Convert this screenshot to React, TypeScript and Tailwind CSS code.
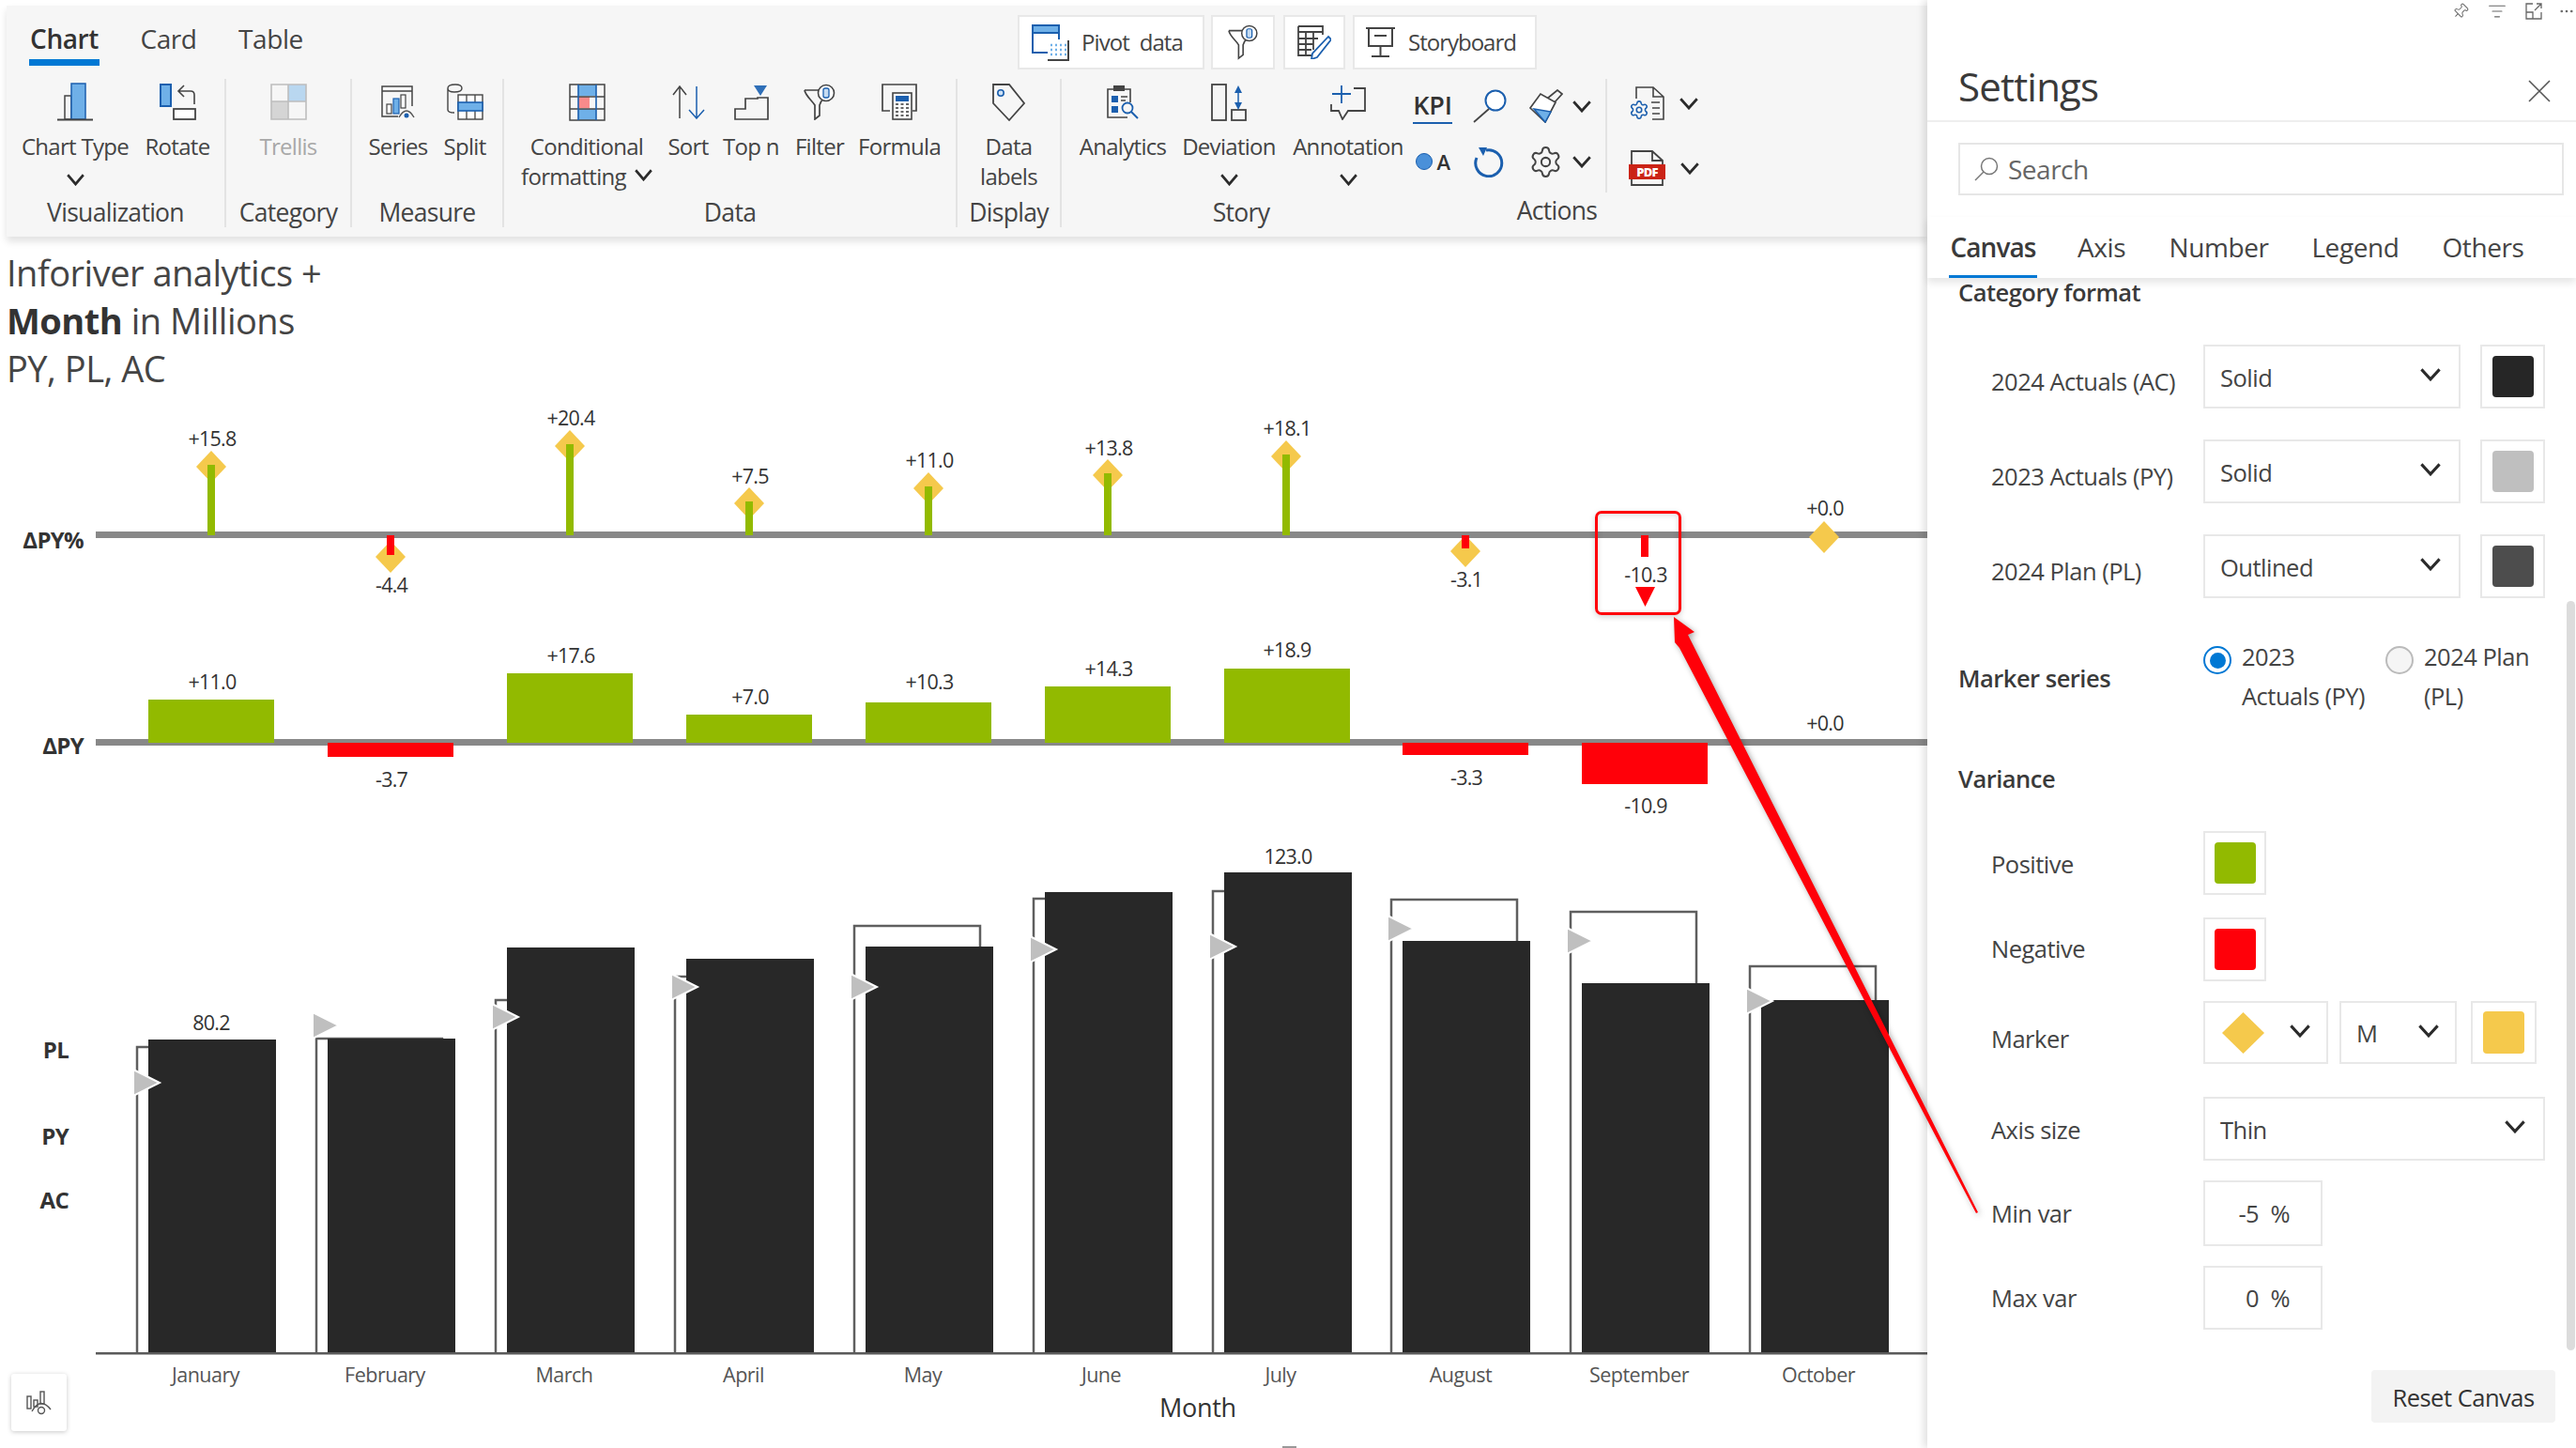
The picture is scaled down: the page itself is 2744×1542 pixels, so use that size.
import React from "react";
import { Settings as Gear, Pin, ListFilter, Ellipsis } from "lucide-react";

const G = "#444";
const B = "#1b5fae";
const L = "#6fb0e8";

function Chevron({ w = 20, h = 13 }: { w?: number; h?: number }) {
  return (
    <svg width={w} height={h} viewBox="0 0 16 10" fill="none" stroke="#2b2b2b" strokeWidth="2.2" preserveAspectRatio="none">
      <path d="M1 1 L8 8.5 L15 1" />
    </svg>
  );
}

const ChartTypeI = () => (
  <svg width="38" height="41" viewBox="0 0 38 41" fill="none">
    <rect x="8" y="14" width="7" height="25" stroke={G} strokeWidth="1.5" />
    <rect x="15" y="1" width="15" height="38" fill={L} stroke={B} strokeWidth="1.5" />
    <path d="M0 39.5H38" stroke={G} strokeWidth="2" />
  </svg>
);
const RotateI = () => (
  <svg width="39" height="39" viewBox="0 0 39 39" fill="none">
    <rect x="1" y="1" width="11" height="23" fill={L} stroke={B} strokeWidth="2" />
    <path d="M37 22V12Q37 8 33 8H21M26 2L20 8L26 14" stroke={G} strokeWidth="1.6" />
    <rect x="15" y="27" width="23" height="11" fill="#fff" stroke={G} strokeWidth="1.8" />
  </svg>
);
const TrellisI = () => (
  <svg width="39" height="39" viewBox="0 0 39 39" fill="none">
    <rect x="19" y="1" width="19" height="18" fill="#b9d7f0" />
    <rect x="1" y="19" width="18" height="19" fill="#d5d5d5" />
    <path d="M1 1H38V38H1ZM19 1V38M1 19H38" stroke="#bdbdbd" strokeWidth="1.6" />
  </svg>
);
const SeriesI = () => (
  <svg width="36" height="36" viewBox="0 0 36 36" fill="none">
    <path d="M18 33H1V1H33V22M1 6H33" stroke={G} strokeWidth="1.5" />
    <rect x="6" y="20" width="5" height="10" stroke={G} strokeWidth="1.2" />
    <rect x="13" y="14" width="6" height="16" fill={L} stroke={B} strokeWidth="1.2" />
    <rect x="21" y="10" width="5" height="14" stroke={G} strokeWidth="1.2" />
    <path d="M19 34Q27 20 35 34" stroke="#555" strokeWidth="1.4" />
    <circle cx="27" cy="32" r="2.5" fill={B} />
  </svg>
);
const SplitI = () => (
  <svg width="39" height="39" viewBox="0 0 39 39" fill="none">
    <path d="M1 5V28Q1 31 8 31M1 5Q1 1 9 1Q16 1 16 5Q16 9 8 9Q1 9 1 5Z" stroke={G} strokeWidth="1.4" />
    <rect x="12" y="12" width="26" height="26" fill="#fff" stroke={G} strokeWidth="1.4" />
    <path d="M21 12V38M30 12V38" stroke={G} strokeWidth="1.3" />
    <rect x="12" y="20" width="26" height="9" fill={L} stroke={B} strokeWidth="1.6" />
  </svg>
);
const CondI = () => (
  <svg width="39" height="40" viewBox="0 0 39 40" fill="none">
    <rect x="10" y="1" width="19" height="12" fill={L} />
    <rect x="10" y="27" width="19" height="12" fill={L} />
    <rect x="10" y="14" width="12" height="12" fill="#f78b8b" />
    <path d="M1 1H38V39H1ZM1 14H38M1 27H38" stroke={G} strokeWidth="1.5" />
    <path d="M10 1V39M29 1V39" stroke={B} strokeWidth="1.6" />
  </svg>
);
const SortI = () => (
  <svg width="35" height="36" viewBox="0 0 35 36" fill="none">
    <path d="M8 35V1M1 10L8 1L15 10" stroke={G} strokeWidth="1.5" />
    <path d="M26 1V34M18 26L26 35L34 26" stroke={B} strokeWidth="1.5" />
  </svg>
);
const TopNI = () => (
  <svg width="37" height="38" viewBox="0 0 37 38" fill="none">
    <path d="M21 1H35L28 12Z" fill="#2f6fb8" />
    <path d="M1 37V26H12V15H25V14H36V37Z" stroke={G} strokeWidth="1.7" />
  </svg>
);
const FilterI = ({ s = 1 }: { s?: number }) => (
  <svg width={34 * s} height={39 * s} viewBox="0 0 34 39" fill="none">
    <path d="M1 7H20M1 7C2 13 9 18 12 23V38L17 34V23C18 20 19 18 21 16" stroke={G} strokeWidth="1.7" />
    <circle cx="24" cy="10" r="8.5" fill="#fff" stroke={G} strokeWidth="1.6" />
    <rect x="21" y="5" width="6" height="10" rx="2" fill="#c6dcf2" stroke={B} strokeWidth="1.3" />
  </svg>
);
const FormulaI = () => (
  <svg width="38" height="39" viewBox="0 0 38 39" fill="none">
    <path d="M9 29H1V1H37V29H33" stroke={G} strokeWidth="1.7" />
    <rect x="12" y="10" width="20" height="28" fill="#fff" stroke={G} strokeWidth="1.6" />
    <rect x="15" y="13" width="14" height="6" fill={B} />
    {[22, 26, 30, 34].map((y) => (
      <path key={y} d={`M15 ${y}h3M20.500 ${y}h3M26 ${y}h3`} stroke="#666" strokeWidth="2" />
    ))}
  </svg>
);
const TagI = () => (
  <svg width="37" height="42" viewBox="0 0 37 42" fill="none">
    <path d="M2 2H19L35 22L19 40L2 22Z" stroke={G} strokeWidth="1.8" />
    <circle cx="10" cy="11" r="3.200" fill="#cfe2f5" stroke={B} strokeWidth="1.6" />
  </svg>
);
const AnalyticsI = () => (
  <svg width="35" height="36" viewBox="0 0 35 36" fill="none">
    <path d="M22 34H1V4H25V18" stroke={G} strokeWidth="1.6" />
    <rect x="7" y="0" width="12" height="6" fill={G} />
    <rect x="5" y="11" width="7" height="7" fill={B} />
    <rect x="5" y="22" width="7" height="7" fill={B} />
    <path d="M15 12H22M15 16H20" stroke={G} strokeWidth="1.3" />
    <circle cx="22" cy="24" r="5.500" stroke={B} strokeWidth="1.800" />
    <path d="M26 28L33 35" stroke={B} strokeWidth="2" />
  </svg>
);
const DeviationI = () => (
  <svg width="38" height="40" viewBox="0 0 38 40" fill="none">
    <rect x="1" y="1" width="15" height="38" stroke={G} strokeWidth="1.800" />
    <rect x="22" y="28" width="15" height="11" stroke={G} strokeWidth="1.800" />
    <path d="M29 4V26" stroke={B} strokeWidth="1.500" />
    <path d="M25 10L29 2L33 10ZM25 20L29 28L33 20Z" fill={B} />
  </svg>
);
const AnnotationI = () => (
  <svg width="39" height="38" viewBox="0 0 39 38" fill="none">
    <path d="M12 1V20M2 10H22" stroke={B} strokeWidth="1.800" />
    <path d="M25 4H37V28H19L13 37L9 28H1V21" stroke={G} strokeWidth="1.800" />
  </svg>
);
const MagI = () => (
  <svg width="37" height="36" viewBox="0 0 37 36" fill="none">
    <circle cx="25" cy="12" r="10.500" fill="#fff" stroke={B} strokeWidth="2" />
    <path d="M18 21L2 35" stroke={G} strokeWidth="1.800" />
  </svg>
);
const RefreshI = () => (
  <svg width="33" height="33" viewBox="0 0 33 33" fill="none">
    <path d="M13 4A14 14 0 1 1 3 12" stroke={B} strokeWidth="3" />
    <path d="M5 1L14 1L10 10Z" fill={B} />
  </svg>
);
const BrushI = () => (
  <svg width="37" height="36" viewBox="0 0 37 36" fill="none">
    <path d="M20 10L31 1L36 5L27 15" stroke={G} strokeWidth="1.700" />
    <path d="M2 20L13 5L29 14L18 35Z" fill="#fff" stroke={G} strokeWidth="1.700" />
    <path d="M6 21L24 24L18 35Z" fill={L} stroke={B} strokeWidth="1.500" />
  </svg>
);
const DocGearI = () => (
  <svg width="38" height="36" viewBox="0 0 38 36" fill="none">
    <path d="M8 13V1H26L37 11V35H25M26 1V11H37" stroke={G} strokeWidth="1.600" />
    <path d="M24 17H33M25 23H33M25 29H33" stroke={G} strokeWidth="1.600" />
    <Gear x={0} y={14} width={22} height={22} stroke={B} strokeWidth={1.700} />
  </svg>
);
const PdfI = () => (
  <svg width="39" height="38" viewBox="0 0 39 38" fill="none">
    <path d="M3 16V1H25L36 11V16M3 30V37H36V30M25 1V11H36" stroke={G} strokeWidth="1.800" />
    <rect x="0" y="15" width="39" height="16" fill="#cb2316" />
    <text x="19.500" y="28" textAnchor="middle" fill="#fff" fontSize="13" fontWeight="800">PDF</text>
  </svg>
);
const PivotI = () => (
  <svg width="40" height="39" viewBox="0 0 40 39" fill="none">
    <rect x="1" y="1" width="28" height="8" fill={L} />
    <path d="M17 30H1V1H29V16M1 9H29" stroke={B} strokeWidth="2" />
    <path d="M39 17V38H17" stroke={G} strokeWidth="2" />
    {[22, 27, 32].map((y) => (
      <path key={y} d={`M20 ${y}h2M25 ${y}h2M30 ${y}h2M35 ${y}h2`} stroke={L} strokeWidth="2.500" />
    ))}
  </svg>
);
const TableEditI = () => (
  <svg width="36" height="36" viewBox="0 0 36 36" fill="none">
    <path d="M1 1H27V10M20 32H1V1M1 7H27M1 14H22M1 20H17M1 26H15M9 7V32M17 7V26" stroke={G} strokeWidth="1.800" />
    <path d="M33 12L36 15L21 34L15 36L16 30Z" fill="#fff" stroke={B} strokeWidth="1.800" />
  </svg>
);
const BoardI = () => (
  <svg width="31" height="32" viewBox="0 0 31 32" fill="none">
    <path d="M0 1H31M3 1V20H28V1M15.500 20V31M6 31H25M9 9H22" stroke={G} strokeWidth="2" />
  </svg>
);
const SearchI = () => (
  <svg width="26" height="26" viewBox="0 0 26 26" fill="none">
    <circle cx="16" cy="10" r="8.500" stroke="#777" strokeWidth="1.500" />
    <path d="M10 16L1 25" stroke="#777" strokeWidth="1.500" />
  </svg>
);

function Item({ w, icon, label, label2, chev, muted, inlineChev }: { w: string; icon: React.ReactNode; label: string; label2?: string; chev?: boolean; muted?: boolean; inlineChev?: boolean }) {
  return (
    <div className={`${w} shrink-0 flex flex-col items-center`}>
      <div className="h-[49px] mb-[7px] flex items-center justify-center">{icon}</div>
      <div className={`leading-[32px] whitespace-nowrap ${muted ? "text-[#a8a8a8]" : "text-[#444]"}`}>{label}</div>
      {label2 && (
        <div className="leading-[32px] whitespace-nowrap text-[#444] flex items-center gap-[9px]">
          {label2}
          {inlineChev && <span className="-mt-[3px]"><Chevron w={19} h={13} /></span>}
        </div>
      )}
      {chev && (
        <div className="h-[32px] mt-[3px] flex items-center">
          <Chevron w={19} h={13} />
        </div>
      )}
    </div>
  );
}

function Group({ w, label, children, sep = true, labelCls = "", body = "" }: { w: string; label: string; children: React.ReactNode; sep?: boolean; labelCls?: string; body?: string }) {
  return (
    <div className={`${w} h-[158px] shrink-0 flex flex-col ${sep ? "border-r-2 border-[#e3e3e3]" : ""}`}>
      <div className={`h-[126px] flex ${body}`}>{children}</div>
      <div className={`h-[32px] leading-[32px] text-center text-[26.5px] text-[#444] whitespace-nowrap ${labelCls}`}>{label}</div>
    </div>
  );
}

function Ribbon() {
  return (
    <div className="ml-[7px] mt-[6px] w-[2046px] h-[246px] bg-[#f6f6f6] shadow-[0_5px_8px_rgba(0,0,0,0.12)] flex flex-col text-[24px] tracking-[-0.7px] shrink-0 relative z-10">
      <div className="h-[78px] flex shrink-0">
        <div className="flex pl-[24px] w-[1077px] text-[28px] text-[#444] tracking-[-0.4px]">
          <div className="w-[75px] h-[64px] leading-[70px] text-center font-semibold border-b-[7px] border-[#0078d4] text-[#333]">Chart</div>
          <div className="w-[61px] ml-[43px] leading-[70px] text-center">Card</div>
          <div className="w-[67px] ml-[44px] leading-[70px] text-center">Table</div>
        </div>
        <div className="flex gap-[7px] mt-[10px] h-[58px]">
          <div className="w-[199px] bg-white border-2 border-[#e8e8e8] flex items-center pl-[13px] gap-[13px] text-[#444] tracking-[-0.9px]"><PivotI /><span className="whitespace-pre">Pivot  data</span></div>
          <div className="w-[68px] bg-white border-2 border-[#e8e8e8] flex items-center justify-center"><FilterI s={0.95} /></div>
          <div className="w-[66px] ml-[2px] bg-white border-2 border-[#e8e8e8] flex items-center justify-center"><TableEditI /></div>
          <div className="w-[196px] ml-[1px] bg-white border-2 border-[#e8e8e8] flex items-center pl-[12px] gap-[14px] text-[#444] tracking-[-1px]"><BoardI /><span>Storyboard</span></div>
        </div>
      </div>
      <div className="flex h-[168px]">
        <Group w="w-[234px]" label="Visualization" body="pl-[13px]">
          <Item w="w-[120px]" icon={<ChartTypeI />} label="Chart Type" chev />
          <Item w="w-[98px]" icon={<RotateI />} label="Rotate" />
        </Group>
        <Group w="w-[134px]" label="Category" body="justify-center">
          <Item w="w-[100px]" icon={<TrellisI />} label="Trellis" muted />
        </Group>
        <Group w="w-[162px]" label="Measure" body="pl-[9px]">
          <Item w="w-[80px]" icon={<SeriesI />} label="Series" />
          <Item w="w-[62px]" icon={<SplitI />} label="Split" />
        </Group>
        <Group w="w-[483px]" label="Data" body="pl-[13px]">
          <Item w="w-[150px]" icon={<CondI />} label="Conditional" label2="formatting" inlineChev />
          <Item w="w-[66px]" icon={<SortI />} label="Sort" />
          <Item w="w-[68px]" icon={<TopNI />} label="Top n" />
          <Item w="w-[78px]" icon={<FilterI />} label="Filter" />
          <Item w="w-[92px]" icon={<FormulaI />} label="Formula" />
        </Group>
        <Group w="w-[111px]" label="Display" body="justify-center">
          <Item w="w-[100px]" icon={<TagI />} label="Data" label2="labels" />
        </Group>
        <Group w="w-[369px]" label="Story" sep={false} labelCls="pl-[13px]" body="pl-[15px]">
          <Item w="w-[100px]" icon={<AnalyticsI />} label="Analytics" />
          <Item w="w-[126px]" icon={<DeviationI />} label="Deviation" chev />
          <Item w="w-[128px]" icon={<AnnotationI />} label="Annotation" chev />
        </Group>
        <Group w="w-[303px]" label="Actions" sep={false} labelCls="pl-[14px] -mt-[2px]">
          <div className="w-[212px] h-[121px] border-r-2 border-[#e3e3e3] grid grid-cols-[52px_68px_92px] grid-rows-[58px_60px]">
            <div className="flex items-center justify-center">
              <span className="text-[27px] font-semibold text-[#333] leading-[36px] border-b-2 border-[#1b5fae] tracking-[-0.2px]">KPI</span>
            </div>
            <div className="flex items-center justify-center"><MagI /></div>
            <div className="flex items-center pl-[8px] gap-[10px]"><BrushI /><Chevron /></div>
            <div className="flex items-center justify-center gap-[5px]">
              <span className="w-[18px] h-[18px] rounded-full bg-[#4a90d9] border border-[#1b5fae]"></span>
              <span className="text-[22px] font-semibold text-[#333]">A</span>
            </div>
            <div className="flex items-center justify-center"><RefreshI /></div>
            <div className="flex items-center pl-[8px] gap-[10px]"><Gear size={37} stroke="#444" strokeWidth={1.300} /><Chevron /></div>
          </div>
          <div className="flex flex-col pl-[23px] pt-[8px] gap-[32px]">
            <div className="flex items-center gap-[16px]"><DocGearI /><Chevron /></div>
            <div className="flex items-center gap-[16px]"><PdfI /><Chevron /></div>
          </div>
        </Group>
      </div>
    </div>
  );
}

const XS = [158, 349, 540, 731, 922, 1113, 1304, 1494, 1685, 1876];
const CX = [225, 416, 607, 798, 989, 1180, 1370, 1561, 1752, 1943];
const LOLLI = [
  { end: 495, d: 497, t: "+15.8", ty: 466 },
  { end: 591, d: 593, t: "-4.4", ty: 622 },
  { end: 473, d: 475, t: "+20.4", ty: 444 },
  { end: 534, d: 536, t: "+7.5", ty: 506 },
  { end: 518, d: 520, t: "+11.0", ty: 489 },
  { end: 504, d: 506, t: "+13.8", ty: 476 },
  { end: 484, d: 486, t: "+18.1", ty: 455 },
  { end: 584, d: 587, t: "-3.1", ty: 616 },
  { end: 593, d: 0, t: "-10.3", ty: 611 },
  { end: 570, d: 572, t: "+0.0", ty: 540 },
];
const DBARS = [
  { y: 745, t: "+11.0", ty: 725 },
  { y: 806, t: "-3.7", ty: 829 },
  { y: 717, t: "+17.6", ty: 697 },
  { y: 761, t: "+7.0", ty: 741 },
  { y: 748, t: "+10.3", ty: 725 },
  { y: 731, t: "+14.3", ty: 711 },
  { y: 712, t: "+18.9", ty: 691 },
  { y: 804, t: "-3.3", ty: 827 },
  { y: 835, t: "-10.9", ty: 857 },
  { y: 791, t: "+0.0", ty: 769 },
];
const AC = [1107, 1106, 1009, 1021, 1008, 950, 929, 1002, 1047, 1065];
const PL = [1115, 1106, 1065, 1040, 986, 957, 949, 958, 971, 1029];
const PY = [1153, 1092, 1083, 1051, 1051, 1011, 1008, 989, 1002, 1066];
const MONTHS: [string, number][] = [
  ["January", 219], ["February", 410], ["March", 601], ["April", 792], ["May", 983],
  ["June", 1173], ["July", 1364], ["August", 1556], ["September", 1746], ["October", 1937],
];
const BASE = 1441;
const GREEN = "#92ba00";
const RED = "#ff0009";

function Chart() {
  const lab = { textAnchor: "middle" as const, dominantBaseline: "central" as const, fontSize: 21.5, fill: "#333", letterSpacing: "-0.8" };
  const hdr = { textAnchor: "end" as const, dominantBaseline: "central" as const, fontSize: 24, fontWeight: 700, fill: "#333", letterSpacing: "-0.7" };
  return (
    <svg width="2053" height="1122" viewBox="0 420 2053 1122" className="block shrink-0">
      {/* Delta percent */}
      <text x="89" y="574" {...hdr}>ΔPY%</text>
      <rect x="102" y="566" width="1951" height="7" fill="#888" />
      {LOLLI.map((p, i) => {
        const up = p.end < 570;
        return (
          <g key={i}>
            {p.d > 0 && <path d={`M${CX[i]} ${p.d - 17} L${CX[i] + 16} ${p.d} L${CX[i]} ${p.d + 17} L${CX[i] - 16} ${p.d}Z`} fill="#f5c94c" />}
            {p.end !== 570 && (
              <rect x={CX[i] - 4} y={up ? p.end : 570} width="8" height={up ? 570 - p.end : p.end - 570} fill={up ? GREEN : RED} />
            )}
            <text x={CX[i] + 1} y={p.ty} {...lab}>{p.t}</text>
          </g>
        );
      })}
      <path d="M1742 625H1763L1752.500 646Z" fill={RED} />
      {/* Delta */}
      <text x="89" y="793" {...hdr}>ΔPY</text>
      <rect x="102" y="787" width="1951" height="7" fill="#888" />
      {DBARS.map((b, i) => (
        <g key={i}>
          {b.y !== 791 && (
            <rect x={XS[i]} y={Math.min(b.y, 791)} width="134" height={Math.abs(791 - b.y)} fill={b.y < 791 ? GREEN : RED} />
          )}
          <text x={CX[i] + 1} y={b.ty} {...lab}>{b.t}</text>
        </g>
      ))}
      {/* Main */}
      <text x="73" y="1117" {...hdr}>PL</text>
      <text x="73" y="1209" {...hdr}>PY</text>
      <text x="73" y="1277" {...hdr}>AC</text>
      {XS.map((x, i) => (
        <path key={"pl" + i} d={`M${x - 12} ${BASE} V${PL[i]} H${x + 122} V${BASE}`} fill="none" stroke="#5f5f5f" strokeWidth="2.500" />
      ))}
      {XS.map((x, i) => (
        <rect key={"ac" + i} x={x} y={AC[i]} width="136" height={BASE - AC[i]} fill="#282828" />
      ))}
      <rect x="102" y="1440" width="1951" height="2.500" fill="#5a5a5a" />
      {XS.map((x, i) => (
        <path key={"py" + i} d={`M${x - 16} ${PY[i] - 14} L${x + 12} ${PY[i]} L${x - 16} ${PY[i] + 14}Z`} fill="#bfbfbf" stroke="#fff" strokeWidth="2" />
      ))}
      <text x="225" y="1088" {...lab}>80.2</text>
      <text x="1372" y="911" {...lab}>123.0</text>
      {MONTHS.map(([m, x]) => (
        <text key={m} x={x} y="1463" textAnchor="middle" dominantBaseline="central" fontSize="21.5" fill="#555" letterSpacing="-0.5">{m}</text>
      ))}
      <text x="1276" y="1498" textAnchor="middle" dominantBaseline="central" fontSize="27" fontWeight="500" fill="#333" letterSpacing="-0.3">Month</text>
      <rect x="1366" y="1540" width="15" height="2" fill="#999" />
    </svg>
  );
}

function Select({ w, text, chevCls = "" }: { w: string; text: string; chevCls?: string }) {
  return (
    <div className={`${w} h-full border-2 border-[#e8e8e8] bg-white flex items-center justify-between pl-[16px] pr-[19px] text-[#444]`}>
      <span className="mt-[2px]">{text}</span>
      <span className={`-mt-[4px] ${chevCls}`}><Chevron w={22} h={14} /></span>
    </div>
  );
}

function Swatch({ color, w = "w-[69px]", inner = "w-[44px]" }: { color: string; w?: string; inner?: string }) {
  return (
    <div className={`${w} h-full border-2 border-[#e8e8e8] bg-white flex items-center justify-center`}>
      <div className={`${inner} h-[44px] rounded-[4px] ${color}`}></div>
    </div>
  );
}

function Label({ text, cls = "" }: { text: string; cls?: string }) {
  return <div className={`w-[261px] shrink-0 text-[#444] whitespace-nowrap ${cls}`}>{text}</div>;
}

function Panel() {
  return (
    <div className="w-[691px] h-[1542px] shrink-0 bg-white flex flex-col relative z-10 shadow-[-4px_0_8px_rgba(0,0,0,0.12)] text-[25.5px] tracking-[-0.5px]">
      <div className="h-[130px] shrink-0 border-b-2 border-[#eeeeee]">
        <div className="h-[24px] flex items-center justify-end">
          <span className="mr-[20px] rotate-45"><Pin size={18} stroke="#666" strokeWidth={1.300} /></span>
          <span className="mr-[19px]"><ListFilter size={20} stroke="#666" strokeWidth={1.300} /></span>
          <svg width="20" height="20" viewBox="0 0 20 20" fill="none" stroke="#666" strokeWidth="1.300" className="mr-[16px]">
            <path d="M9 2H2V18H18V11M2 11H9V18M11 9L18 2M13 2H18V7" />
          </svg>
          <span className="mr-[1px]"><Ellipsis size={18} stroke="#666" strokeWidth={1.500} /></span>
        </div>
        <div className="mt-[42px] h-[50px] flex justify-between items-center pl-[33px] pr-[27px]">
          <span className="text-[42px] text-[#3a3a3a] tracking-[-0.8px]">Settings</span>
          <svg width="24" height="24" viewBox="0 0 24 24" stroke="#555" strokeWidth="1.600" className="mt-[12px]"><path d="M1 1L23 23M23 1L1 23" /></svg>
        </div>
      </div>
      <div className="h-[101px] shrink-0 pt-[22px] pl-[33px]">
        <div className="w-[645px] h-[56px] border-2 border-[#e6e6e6] flex items-center pl-[15px] gap-[10px] text-[28px] text-[#666]">
          <SearchI />
          <span>Search</span>
        </div>
      </div>
      <div className="h-[65px] shrink-0 flex pl-[23px] text-[28px] tracking-[-0.4px] text-[#444] shadow-[0_5px_8px_rgba(0,0,0,0.10)] relative z-10 bg-white">
        <div className="w-[94px] leading-[64px] text-center whitespace-nowrap font-semibold text-[#3a3a3a] border-b-[3px] border-[#0078d4] tracking-[-0.9px]">Canvas</div>
        <div className="w-[51px] ml-[43px] leading-[64px] text-center whitespace-nowrap">Axis</div>
        <div className="w-[107px] ml-[46px] leading-[64px] text-center whitespace-nowrap">Number</div>
        <div className="w-[96px] ml-[44px] leading-[64px] text-center whitespace-nowrap">Legend</div>
        <div className="w-[88px] ml-[44px] leading-[64px] text-center whitespace-nowrap">Others</div>
      </div>

      <div className="flex flex-col pl-[33px] flex-1">
        <div className="h-[32px] leading-[30px] font-semibold text-[#3a3a3a]">Category format</div>

        <div className="mt-[39px] h-[68px] flex">
          <Label text="2024 Actuals (AC)" cls="pl-[35px] leading-[78px]" />
          <Select w="w-[274px]" text="Solid" />
          <div className="w-[21px]"></div>
          <Swatch color="bg-[#262626]" />
        </div>
        <div className="mt-[33px] h-[68px] flex">
          <Label text="2023 Actuals (PY)" cls="pl-[35px] leading-[78px]" />
          <Select w="w-[274px]" text="Solid" />
          <div className="w-[21px]"></div>
          <Swatch color="bg-[#bfbfbf]" />
        </div>
        <div className="mt-[33px] h-[68px] flex">
          <Label text="2024 Plan (PL)" cls="pl-[35px] leading-[78px]" />
          <Select w="w-[274px]" text="Outlined" />
          <div className="w-[21px]"></div>
          <Swatch color="bg-[#4d4d4d]" />
        </div>

        <div className="mt-[43px] flex h-[84px]">
          <div className="w-[261px] shrink-0 pt-[26px] leading-[32px] font-semibold text-[#3a3a3a]">Marker series</div>
          <div className="w-[194px] flex">
            <span className="mt-[8px] w-[30px] h-[30px] shrink-0 rounded-full border-2 border-[#0078d4] flex items-center justify-center">
              <span className="w-[17px] h-[17px] rounded-full bg-[#0078d4]"></span>
            </span>
            <div className="ml-[11px] -mt-[2px] leading-[42px] text-[#444]">2023<br /><span className="whitespace-nowrap">Actuals (PY)</span></div>
          </div>
          <div className="flex">
            <span className="mt-[8px] w-[30px] h-[30px] shrink-0 rounded-full border-2 border-[#bbbbbb] bg-[#f5f5f5]"></span>
            <div className="ml-[11px] -mt-[2px] leading-[42px] text-[#444]"><span className="whitespace-nowrap">2024 Plan</span><br />(PL)</div>
          </div>
        </div>

        <div className="mt-[50px] h-[32px] leading-[30px] font-semibold text-[#3a3a3a]">Variance</div>

        <div className="mt-[39px] h-[68px] flex">
          <Label text="Positive" cls="pl-[35px] leading-[70px]" />
          <Swatch color="bg-[#92ba00]" w="w-[67px]" />
        </div>
        <div className="mt-[24px] h-[68px] flex">
          <Label text="Negative" cls="pl-[35px] leading-[66px]" />
          <Swatch color="bg-[#ff0009]" w="w-[67px]" />
        </div>
        <div className="mt-[21px] h-[67px] flex">
          <Label text="Marker" cls="pl-[35px] leading-[81px]" />
          <div className="w-[133px] h-full border-2 border-[#e8e8e8] flex items-center justify-between pl-[18px] pr-[17px]">
            <svg width="45" height="44" viewBox="0 0 45 44"><path d="M22.500 0L45 22L22.500 44L0 22Z" fill="#f5c94c" /></svg>
            <span className="-mt-[4px]"><Chevron w={22} h={14} /></span>
          </div>
          <div className="w-[125px] h-full ml-[12px] border-2 border-[#e8e8e8] flex items-center justify-between pl-[16px] pr-[17px] text-[#444]">
            <span className="mt-[2px]">M</span>
            <span className="-mt-[4px]"><Chevron w={22} h={14} /></span>
          </div>
          <div className="w-[70px] h-full ml-[15px] border-2 border-[#e8e8e8] flex items-center justify-center">
            <div className="w-[44px] h-[45px] rounded-[4px] bg-[#f5c94c]"></div>
          </div>
        </div>
        <div className="mt-[35px] h-[68px] flex">
          <Label text="Axis size" cls="pl-[35px] leading-[70px]" />
          <Select w="w-[364px]" text="Thin" />
        </div>
        <div className="mt-[21px] h-[70px] flex">
          <Label text="Min var" cls="pl-[35px] leading-[70px]" />
          <div className="w-[127px] h-full border-2 border-[#e8e8e8] flex items-center justify-end pr-[33px] text-[#444] whitespace-pre">-5  %</div>
        </div>
        <div className="mt-[21px] h-[68px] flex">
          <Label text="Max var" cls="pl-[35px] leading-[68px]" />
          <div className="w-[127px] h-full border-2 border-[#e8e8e8] flex items-center justify-end pr-[33px] text-[#444] whitespace-pre">0  %</div>
        </div>
        <div className="mt-[43px] self-end mr-[22px] w-[196px] h-[56px] rounded-[4px] bg-[#f3f3f3] flex items-center justify-center pt-[2px] text-[#333]">Reset Canvas</div>
      </div>

      <div className="absolute right-[1px] top-[640px] w-[9px] h-[798px] rounded-full bg-[#dcdcdc]"></div>
    </div>
  );
}

export default function App() {
  return (
    <div className="relative w-[2744px] h-[1542px] overflow-hidden bg-white flex font-['Open_Sans',sans-serif]">
      <div className="w-[2053px] shrink-0 flex flex-col">
        <Ribbon />
        <div className="h-[168px] shrink-0 pl-[7px] pt-[13px] text-[38px] leading-[51px] text-[#444] tracking-[-0.5px]">
          <div>Inforiver analytics +</div>
          <div><span className="font-bold text-[#333]">Month</span> in Millions</div>
          <div>PY, PL, AC</div>
        </div>
        <Chart />
      </div>
      <Panel />

      {/* bottom-left visual toggle */}
      <div className="absolute left-[12px] top-[1463px] w-[59px] h-[61px] bg-white rounded-[3px] shadow-[0_1px_5px_rgba(0,0,0,0.22)] flex items-center justify-center z-10">
        <svg width="27" height="26" viewBox="0 0 27 26" fill="none" stroke="#555" strokeWidth="1.400">
          <rect x="1" y="6" width="4" height="13" />
          <rect x="8" y="10" width="4" height="7" />
          <rect x="15" y="1" width="4" height="13" />
          <path d="M6 22Q15 6 26 20" />
          <circle cx="16" cy="21" r="3.500" />
        </svg>
      </div>

      {/* callout annotations */}
      <div className="absolute left-[1699px] top-[544px] w-[92px] h-[111px] border-[3px] border-[#ff0009] rounded-[7px] shadow-[0_2px_6px_rgba(0,0,0,0.18),inset_0_2px_6px_rgba(0,0,0,0.12)] z-20"></div>
      <svg className="absolute left-0 top-0 z-20 pointer-events-none drop-shadow-[2px_2px_3px_rgba(0,0,0,0.35)]" width="2744" height="1542" viewBox="0 0 2744 1542">
        <path d="M1783 657L1805 673L1798 676L2107 1291L2105 1292L1789 690L1784 684Z" fill="#ff0009" />
      </svg>
    </div>
  );
}
